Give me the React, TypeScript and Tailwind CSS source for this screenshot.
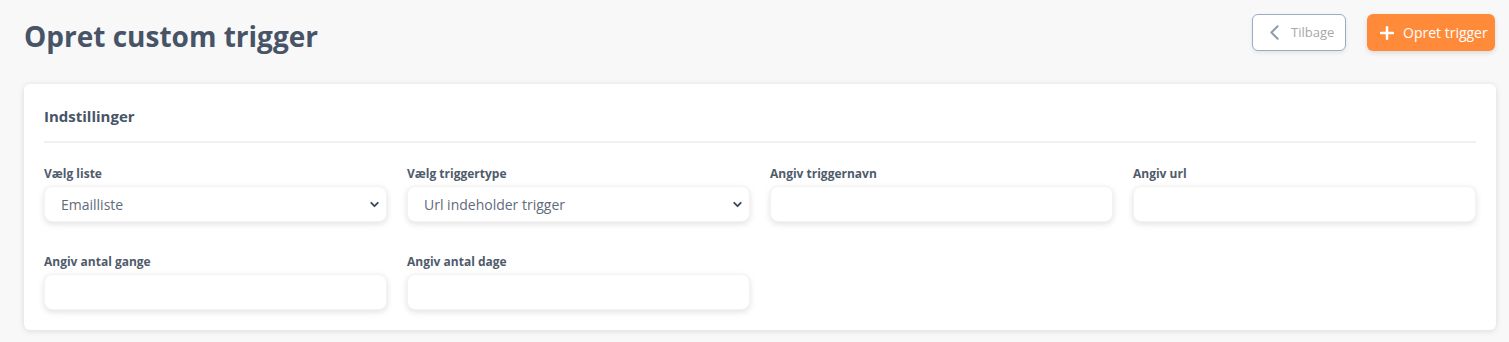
import React from 'react';
import { ChevronLeft, Plus, ChevronDown } from 'lucide-react';

const fieldShadow = 'shadow-[0_2px_6px_rgba(0,0,0,0.12)]';

const SelectField: React.FC<{ label: string; value: string }> = ({ label, value }) => (
  <div>
    <label className="block text-[12px] font-bold text-[#4f5b6b] leading-[16px] mb-[4px]">{label}</label>
    <div className={`flex items-center justify-between h-9 rounded-lg bg-white border border-[#f3f3f3] ${fieldShadow} pl-4 pr-[5px]`}>
      <span className="text-[14px] text-[#5f6b7c]">{value}</span>
      <ChevronDown className="w-[13px] h-[13px] text-[#3f4b5c]" strokeWidth={3.5} />
    </div>
  </div>
);

const TextField: React.FC<{ label: string }> = ({ label }) => (
  <div>
    <label className="block text-[12px] font-bold text-[#4f5b6b] leading-[16px] mb-[4px]">{label}</label>
    <input className={`block w-full h-9 rounded-lg bg-white border border-[#f3f3f3] ${fieldShadow} px-4 text-[14px] outline-none`} />
  </div>
);

export default function App() {
  return (
    <div className="min-h-[342px] bg-[#f8f8f8] pl-6 pr-[13px] pt-[14px] pb-3 font-['Open_Sans',_'Noto_Sans',_sans-serif]">
      {/* Header */}
      <div className="flex items-start justify-between">
        <h1 className="text-[28px] font-bold text-[#475467] leading-[40px] mt-[2px]">Opret custom trigger</h1>
        <div className="flex items-center gap-[21px] mr-[1px]">
          <button className="flex items-center gap-[4px] h-[37px] w-[94px] pl-[9px] rounded-md bg-white border border-[#9aacc2] shadow-[0_2px_4px_rgba(0,0,0,0.08)] text-[13px] text-[#a8a8a8]">
            <ChevronLeft className="w-[25px] h-[25px] text-[#8f9db0]" strokeWidth={2} />
            Tilbage
          </button>
          <button className="flex items-center gap-[6px] h-[37px] w-[128px] pl-[10px] rounded-md bg-[#ff8a3a] shadow-[0_2px_5px_rgba(0,0,0,0.12)] text-[14px] text-white">
            <Plus className="w-5 h-5" strokeWidth={3} />
            Opret trigger
          </button>
        </div>
      </div>

      {/* Indstillinger */}
      <div className="mt-[28px] bg-white rounded-md shadow-[0_1px_6px_rgba(0,0,0,0.12)] px-5 pt-[22px] pb-5">
        <h2 className="text-[15px] font-bold text-[#475467] leading-5">Indstillinger</h2>
        <div className="h-[2px] bg-[#f1f1f1] mt-[15px] mb-[23px]" />
        <div className="grid grid-cols-4 gap-x-5 gap-y-[32px]">
          <SelectField label="Vælg liste" value="Emailliste" />
          <SelectField label="Vælg triggertype" value="Url indeholder trigger" />
          <TextField label="Angiv triggernavn" />
          <TextField label="Angiv url" />
          <TextField label="Angiv antal gange" />
          <TextField label="Angiv antal dage" />
        </div>
      </div>
    </div>
  );
}
